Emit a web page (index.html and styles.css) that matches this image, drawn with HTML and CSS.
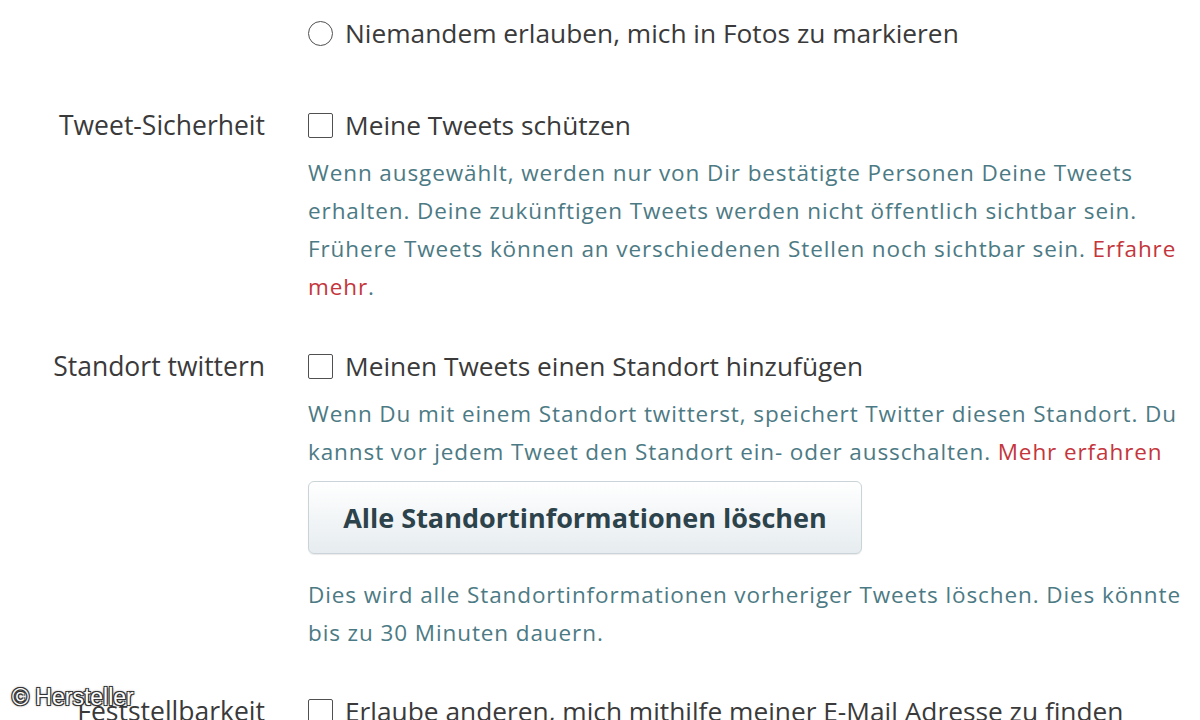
FILE: index.html
```html
<html>
    <head>
        <title>Sicherheit und Datenschutz</title>
        <link rel="stylesheet" href="styles.css">
    </head>
    <body class="body">
        <div class="page">
            <div class="row first">
                <div class="label"></div>
                <div class="content">
                    <label class="option"><span class="radio"></span>Niemandem erlauben, mich in Fotos zu markieren</label>
                </div>
            </div>

            <div class="row">
                <div class="label">Tweet-Sicherheit</div>
                <div class="content">
                    <label class="option"><span class="box"></span>Meine Tweets schützen</label>
                    <p class="help">Wenn ausgewählt, werden nur von Dir bestätigte Personen Deine Tweets<br>erhalten. Deine zukünftigen Tweets werden nicht öffentlich sichtbar sein.<br>Frühere Tweets können an verschiedenen Stellen noch sichtbar sein. <a class="more" href="#">Erfahre<br>mehr</a>.</p>
                </div>
            </div>

            <div class="row">
                <div class="label">Standort twittern</div>
                <div class="content">
                    <label class="option"><span class="box"></span>Meinen Tweets einen Standort hinzufügen</label>
                    <p class="help">Wenn Du mit einem Standort twitterst, speichert Twitter diesen Standort. Du<br>kannst vor jedem Tweet den Standort ein- oder ausschalten. <a class="more" href="#">Mehr erfahren</a></p>
                    <button class="btn">Alle Standortinformationen löschen</button>
                    <p class="help after">Dies wird alle Standortinformationen vorheriger Tweets löschen. Dies könnte<br>bis zu 30 Minuten dauern.</p>
                </div>
            </div>

            <div class="row last">
                <div class="label">Feststellbarkeit</div>
                <div class="content">
                    <label class="option"><span class="box"></span>Erlaube anderen, mich mithilfe meiner E-Mail Adresse zu finden</label>
                </div>
            </div>
        </div>
        <div class="credit">© Hersteller</div>
    </body>
</html>
```

FILE: styles.css
```css
.body{
    margin: 0;
    height: 720px;
    overflow: hidden;
    background: #fff;
    font-family: "Open Sans", "Noto Sans", sans-serif;
    color: #3a3a3a;
    position: relative;
}
.page{
    padding-top: 14px;
}
.row{
    display: grid;
    grid-template-columns: 265px 1fr;
    column-gap: 43px;
    margin-top: 41px;
}
.row.first{
    margin-top: 0;
    margin-bottom: 54px;
}
.row.last{
    margin-top: 40px;
}
.label{
    text-align: right;
    font-size: 26.5px;
    line-height: 38px;
    white-space: nowrap;
}
.option{
    display: flex;
    align-items: center;
    font-size: 26.3px;
    line-height: 38px;
    white-space: nowrap;
}
.box, .radio{
    width: 23px;
    height: 23px;
    border: 1.5px solid #505050;
    margin-right: 12px;
    flex: none;
}
.box{
    border-radius: 2px;
}
.radio{
    border-radius: 50%;
}
.help{
    margin: 10px 0 0;
    font-size: 22.5px;
    letter-spacing: 0.9px;
    line-height: 38px;
    color: #4c7a84;
    white-space: nowrap;
}
.help.after{
    margin-top: 22px;
}
.more{
    color: #c4363c;
    text-decoration: none;
}
.btn{
    display: block;
    margin-top: 10px;
    width: 554px;
    height: 73px;
    font-family: inherit;
    font-weight: bold;
    font-size: 27px;
    color: #2c434b;
    background: linear-gradient(#ffffff, #e6ecef);
    border: 1px solid #c9d3d8;
    border-radius: 6px;
    box-shadow: 0 1px 1px rgba(0,0,0,0.08);
}
.credit{
    position: absolute;
    left: 12px;
    top: 684px;
    font-family: "Liberation Sans", Arial, sans-serif;
    font-size: 23px;
    color: #fff;
    text-shadow: -1px -1px 0 #333, 1px -1px 0 #333, -1px 1px 0 #333, 1px 1px 0 #333, 0 0 3px #000;
}
```
